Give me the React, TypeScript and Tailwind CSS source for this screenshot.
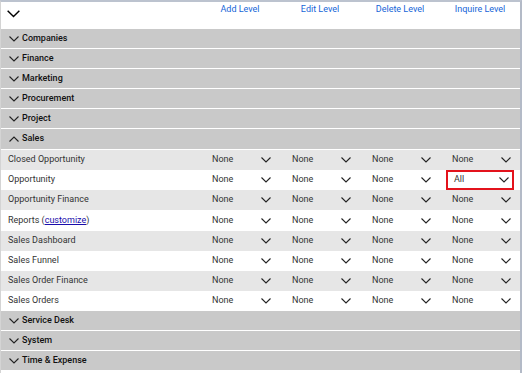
import { Fragment } from 'react';

const sectionsTop = ['Companies', 'Finance', 'Marketing', 'Procurement', 'Project'];
const sectionsBottom = ['Service Desk', 'System', 'Time & Expense'];

const salesRows: { name: string; values: string[]; link?: boolean }[] = [
  { name: 'Closed Opportunity', values: ['None', 'None', 'None', 'None'] },
  { name: 'Opportunity', values: ['None', 'None', 'None', 'All'] },
  { name: 'Opportunity Finance', values: ['None', 'None', 'None', 'None'] },
  { name: 'Reports', values: ['None', 'None', 'None', 'None'], link: true },
  { name: 'Sales Dashboard', values: ['None', 'None', 'None', 'None'] },
  { name: 'Sales Funnel', values: ['None', 'None', 'None', 'None'] },
  { name: 'Sales Order Finance', values: ['None', 'None', 'None', 'None'] },
  { name: 'Sales Orders', values: ['None', 'None', 'None', 'None'] },
];

function Chevron({ up = false, className = '' }: { up?: boolean; className?: string }) {
  return (
    <svg viewBox="0 0 10 6" className={className} fill="none" stroke="currentColor" strokeWidth="1.1">
      {up ? <path d="M0.5 5.5 L5 1 L9.5 5.5" /> : <path d="M0.5 0.5 L5 5 L9.5 0.5" />}
    </svg>
  );
}

function SectionRow({ title, open = false, tall = false }: { title: string; open?: boolean; tall?: boolean }) {
  return (
    <div
      className={`${tall ? 'h-[21px]' : 'h-[20px]'} bg-[#c9c9c9] border-b border-white flex items-center pl-[8px] gap-[3px]`}
    >
      <Chevron up={open} className="w-[10px] h-[6px] text-[#222]" />
      <span className="text-[9px] font-medium text-[#111]">{title}</span>
    </div>
  );
}

function Select({ value, highlight }: { value: string; highlight?: boolean }) {
  return (
    <div className="flex items-center justify-center h-full">
      <div
        className={`w-[68px] h-[20px] flex items-center justify-between pl-[6px] pr-[3px] ${
          highlight ? 'border-2 border-[#e3131c] pl-[4px] pr-[1px]' : ''
        }`}
      >
        <span className="text-[9px] text-[#333]">{value}</span>
        <Chevron className="w-[10px] h-[6px] text-[#222]" />
      </div>
    </div>
  );
}

export default function App() {
  return (
    <div className="w-[522px] h-[373px] bg-white overflow-hidden" style={{ fontFamily: 'Roboto, "Liberation Sans", sans-serif' }}>
      <div className="w-[522px] border-t-2 border-t-[#bcc3cf] border-l border-l-[#d4d4d4] border-r-2 border-r-[#b3bac7] pb-[2px]">
        <div className="grid grid-cols-[199px_repeat(4,80px)] h-[27px] items-start">
          <div className="pl-[6px] pt-[8px]">
            <Chevron className="w-[13px] h-[8px] text-black" />
          </div>
          {['Add Level', 'Edit Level', 'Delete Level', 'Inquire Level'].map((h) => (
            <div key={h} className="text-center text-[9px] text-[#1565d8] pt-[1px]">
              {h}
            </div>
          ))}
        </div>
        {sectionsTop.map((s) => (
          <SectionRow key={s} title={s} />
        ))}
        <SectionRow title="Sales" open tall />
        {salesRows.map((r, i) => (
          <div
            key={r.name}
            className={`grid grid-cols-[199px_repeat(4,80px)] ${r.link ? 'h-[21px]' : 'h-[20px]'} items-center ${
              i % 2 === 0 ? 'bg-[#e6e6e6]' : 'bg-white'
            }`}
          >
            <div className="pl-[7px] text-[9px] text-[#333]">
              {r.link ? (
                <Fragment>
                  Reports (<span className="text-[#1a0dab] underline">customize</span>)
                </Fragment>
              ) : (
                r.name
              )}
            </div>
            {r.values.map((v, j) => (
              <Select key={j} value={v} highlight={r.name === 'Opportunity' && j === 3} />
            ))}
          </div>
        ))}
        {sectionsBottom.map((s) => (
          <SectionRow key={s} title={s} />
        ))}
      </div>
    </div>
  );
}
